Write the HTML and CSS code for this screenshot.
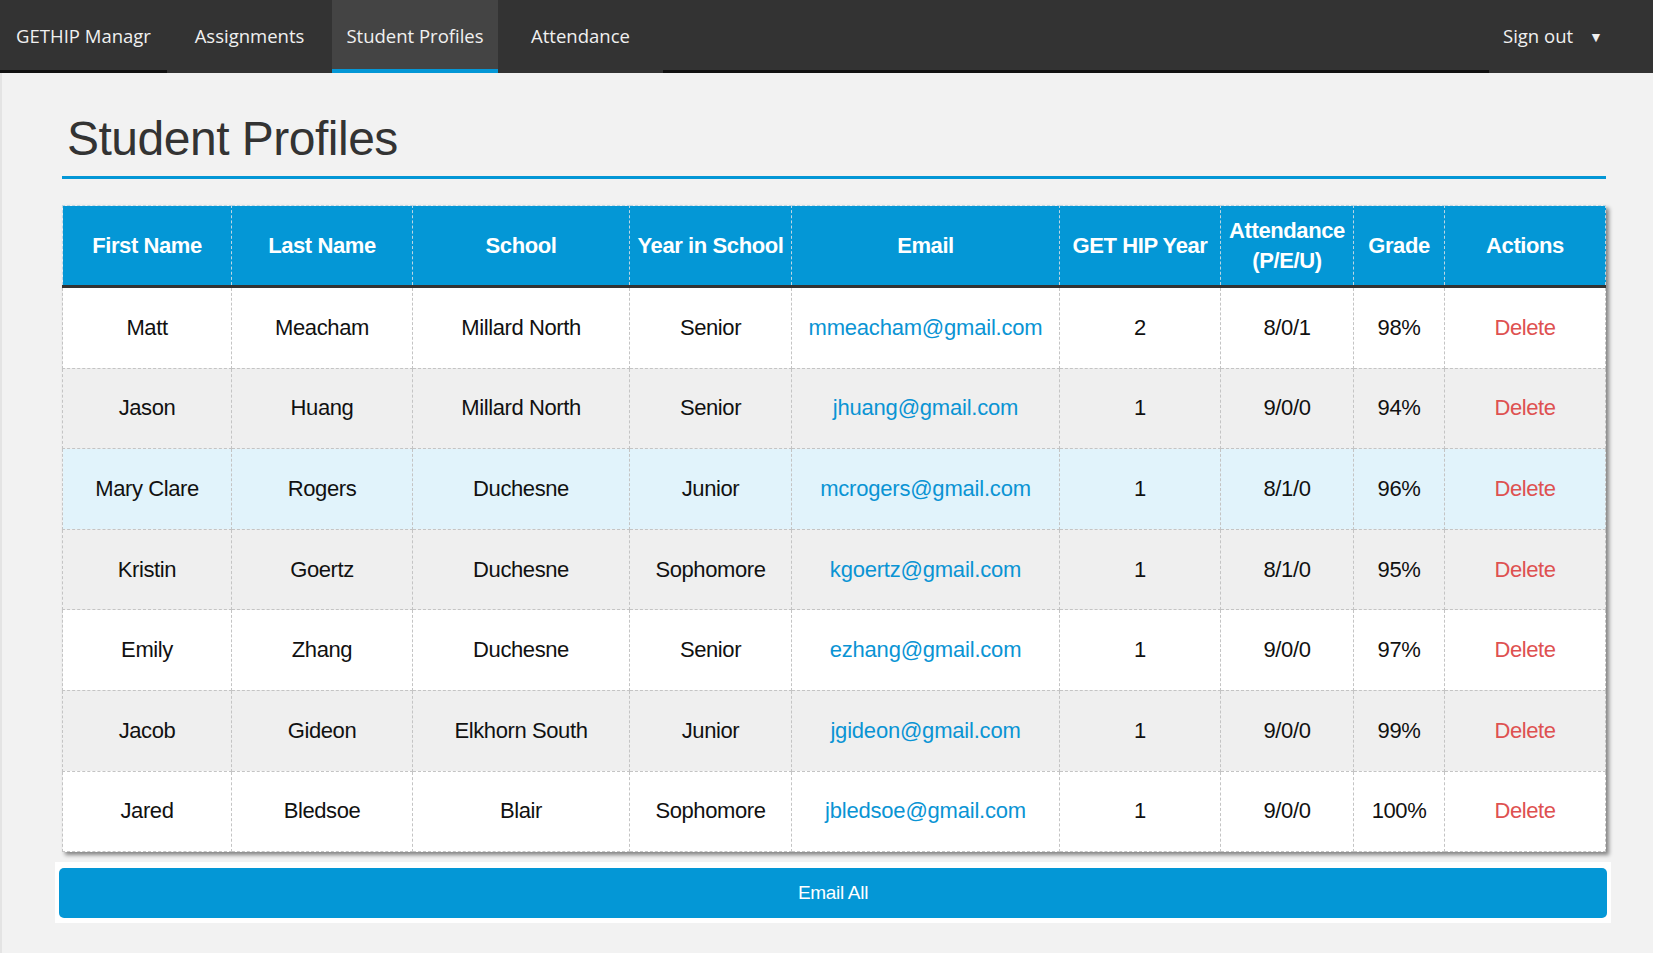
FILE: index.html
```html
<!DOCTYPE html>
<html>
<head>
<meta charset="utf-8">
<title>Student Profiles</title>
<link rel="stylesheet" href="styles.css">
</head>
<body>
<nav class="topnav">
  <a class="nav-item brand" href="#">GETHIP Managr</a>
  <a class="nav-item tab" href="#">Assignments</a>
  <a class="nav-item tab active" href="#">Student Profiles</a>
  <a class="nav-item tab" href="#">Attendance</a>
  <div class="nav-item spacer"></div>
  <a class="nav-item signout" href="#">Sign out <span class="caret">&#9660;</span></a>
</nav>
<main class="page">
  <div class="content">
    <h1 class="title">Student Profiles</h1>
    <div class="rule"></div>
    <table class="students">
      <thead>
        <tr>
          <th class="c1">First Name</th>
          <th class="c2">Last Name</th>
          <th class="c3">School</th>
          <th class="c4">Year in School</th>
          <th class="c5">Email</th>
          <th class="c6">GET HIP Year</th>
          <th class="c7">Attendance<br>(P/E/U)</th>
          <th class="c8">Grade</th>
          <th class="c9">Actions</th>
        </tr>
      </thead>
      <tbody>
        <tr class="odd"><td>Matt</td><td>Meacham</td><td>Millard North</td><td>Senior</td><td><a class="email" href="#">mmeacham@gmail.com</a></td><td>2</td><td>8/0/1</td><td>98%</td><td><a class="del" href="#">Delete</a></td></tr>
        <tr class="even"><td>Jason</td><td>Huang</td><td>Millard North</td><td>Senior</td><td><a class="email" href="#">jhuang@gmail.com</a></td><td>1</td><td>9/0/0</td><td>94%</td><td><a class="del" href="#">Delete</a></td></tr>
        <tr class="hover"><td>Mary Clare</td><td>Rogers</td><td>Duchesne</td><td>Junior</td><td><a class="email" href="#">mcrogers@gmail.com</a></td><td>1</td><td>8/1/0</td><td>96%</td><td><a class="del" href="#">Delete</a></td></tr>
        <tr class="even"><td>Kristin</td><td>Goertz</td><td>Duchesne</td><td>Sophomore</td><td><a class="email" href="#">kgoertz@gmail.com</a></td><td>1</td><td>8/1/0</td><td>95%</td><td><a class="del" href="#">Delete</a></td></tr>
        <tr class="odd"><td>Emily</td><td>Zhang</td><td>Duchesne</td><td>Senior</td><td><a class="email" href="#">ezhang@gmail.com</a></td><td>1</td><td>9/0/0</td><td>97%</td><td><a class="del" href="#">Delete</a></td></tr>
        <tr class="even"><td>Jacob</td><td>Gideon</td><td>Elkhorn South</td><td>Junior</td><td><a class="email" href="#">jgideon@gmail.com</a></td><td>1</td><td>9/0/0</td><td>99%</td><td><a class="del" href="#">Delete</a></td></tr>
        <tr class="odd"><td>Jared</td><td>Bledsoe</td><td>Blair</td><td>Sophomore</td><td><a class="email" href="#">jbledsoe@gmail.com</a></td><td>1</td><td>9/0/0</td><td>100%</td><td><a class="del" href="#">Delete</a></td></tr>
      </tbody>
    </table>
    <div class="button-wrap">
      <button class="email-all">Email All</button>
    </div>
  </div>
</main>
</body>
</html>
```

FILE: styles.css
```css
html {
  background: #ffffff;
}
body {
  margin: 0;
  font-family: "Liberation Sans", Arial, sans-serif;
}

/* ---------- top navigation ---------- */
.topnav {
  display: flex;
  height: 73px;
  background: #333333;
}
.nav-item {
  display: flex;
  align-items: center;
  justify-content: center;
  box-sizing: border-box;
  height: 73px;
  color: #f0f0f0;
  font-family: "Open Sans", "Noto Sans", sans-serif;
  font-size: 18.5px;
  text-decoration: none;
  border-bottom: 3px solid #333333;
}
.brand {
  width: 167px;
  border-bottom-color: #111111;
}
.tab {
  width: 165px;
}
.tab.active {
  width: 166px;
  background: #444444;
  border-bottom: 4px solid #0497d6;
  padding-top: 1px;
}
.spacer {
  flex: 1;
  border-bottom-color: #111111;
}
.signout {
  width: 164px;
  justify-content: flex-start;
  padding-left: 14px;
}
.caret {
  font-size: 14px;
  margin-left: 16px;
  position: relative;
  top: 1px;
}

/* ---------- page ---------- */
.page {
  display: block;
  box-sizing: border-box;
  height: 880px;
  background: #f2f2f2;
  border-left: 2px solid #e4e4e4;
  padding: 0 47px 0 60px;
}
.content {
  display: flex;
  flex-direction: column;
}
.title {
  margin: 0;
  padding: 42px 0 0 5px;
  font-size: 48px;
  line-height: 48px;
  letter-spacing: -0.5px;
  font-weight: normal;
  color: #333333;
}
.rule {
  height: 3px;
  margin-top: 13px;
  background: #0497d6;
}

/* ---------- table ---------- */
.students {
  margin-top: 26px;
  width: 1544px;
  border-collapse: collapse;
  table-layout: fixed;
  box-shadow: 3px 3px 4px rgba(0, 0, 0, 0.45);
  font-size: 22px;
  letter-spacing: -0.4px;
  color: #111111;
}
.students th {
  height: 79px;
  padding: 0;
  background: #0497d6;
  color: #ffffff;
  font-weight: bold;
  font-size: 22px;
  line-height: 30px;
  border: 1px dashed #bcd6e4;
  border-bottom: 3px solid #333333;
  text-align: center;
}
.students td {
  height: 79.6px;
  padding: 0;
  text-align: center;
  border: 1px dashed #c4c4c4;
}
.c1 { width: 168px; }
.c2 { width: 180px; }
.c3 { width: 216px; }
.c4 { width: 161px; }
.c5 { width: 267px; }
.c6 { width: 160px; }
.c7 { width: 132px; }
.c8 { width: 90px; }
.c9 { width: 160px; }

.odd td { background: #ffffff; }
.even td { background: #efefef; }
.hover td { background: #e1f3fb; }

.email {
  color: #0a94d4;
  text-decoration: none;
  letter-spacing: -0.2px;
}
.del {
  color: #de5151;
  text-decoration: none;
}

/* ---------- button ---------- */
.button-wrap {
  margin: 10px -5px 0 -7px;
  padding: 6px 4px 5px 4px;
  background: #ffffff;
}
.email-all {
  display: block;
  width: 100%;
  height: 50px;
  border: none;
  border-radius: 5px;
  background: #0497d6;
  color: #ffffff;
  font-family: "Liberation Sans", Arial, sans-serif;
  font-size: 19px;
  letter-spacing: -0.3px;
  cursor: pointer;
}
```
